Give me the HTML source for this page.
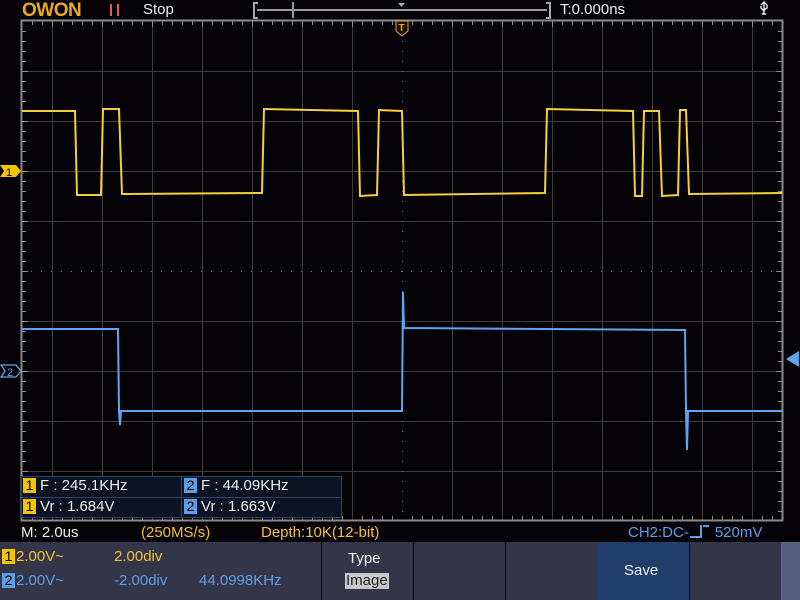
<!DOCTYPE html>
<html><head><meta charset="utf-8"><style>
*{margin:0;padding:0;box-sizing:border-box}
body{width:800px;height:600px;background:#050307;overflow:hidden;font-family:"Liberation Sans",sans-serif;position:relative}
.t{position:absolute;font-size:15px;line-height:16px;white-space:nowrap}
.y{color:#f2c230}.b{color:#5d9fe6}.w{color:#eee}
.badge{display:inline-block;width:13px;height:15px;line-height:15px;text-align:center;color:#000;font-size:14px;margin-right:4px;vertical-align:top}
</style></head><body>
<svg width="800" height="600" style="position:absolute;left:0;top:0">
<g stroke="#3d3d3d" stroke-width="1">
<line x1="52.5" y1="21" x2="52.5" y2="521"/><line x1="102.5" y1="21" x2="102.5" y2="521"/><line x1="152.5" y1="21" x2="152.5" y2="521"/><line x1="202.5" y1="21" x2="202.5" y2="521"/><line x1="252.5" y1="21" x2="252.5" y2="521"/><line x1="302.5" y1="21" x2="302.5" y2="521"/><line x1="352.5" y1="21" x2="352.5" y2="521"/><line x1="452.5" y1="21" x2="452.5" y2="521"/><line x1="502.5" y1="21" x2="502.5" y2="521"/><line x1="552.5" y1="21" x2="552.5" y2="521"/><line x1="602.5" y1="21" x2="602.5" y2="521"/><line x1="652.5" y1="21" x2="652.5" y2="521"/><line x1="702.5" y1="21" x2="702.5" y2="521"/><line x1="752.5" y1="21" x2="752.5" y2="521"/>
<line x1="21" y1="71.5" x2="783" y2="71.5"/><line x1="21" y1="121.5" x2="783" y2="121.5"/><line x1="21" y1="171.5" x2="783" y2="171.5"/><line x1="21" y1="221.5" x2="783" y2="221.5"/><line x1="21" y1="321.5" x2="783" y2="321.5"/><line x1="21" y1="371.5" x2="783" y2="371.5"/><line x1="21" y1="421.5" x2="783" y2="421.5"/><line x1="21" y1="471.5" x2="783" y2="471.5"/>
</g>
<g stroke="#777" stroke-width="1">
<line x1="402.5" y1="21" x2="402.5" y2="521" stroke-dasharray="1 9"/>
<line x1="21" y1="271.5" x2="783" y2="271.5" stroke-dasharray="1 9"/>
</g>
<rect x="21.5" y="20.5" width="761" height="500" fill="none" stroke="#8a8a8a" stroke-width="2"/>
<g stroke="#8a8a8a" stroke-width="1">
<path d="M32.5 21v4M42.5 21v4M62.5 21v4M72.5 21v4M82.5 21v4M92.5 21v4M112.5 21v4M122.5 21v4M132.5 21v4M142.5 21v4M162.5 21v4M172.5 21v4M182.5 21v4M192.5 21v4M212.5 21v4M222.5 21v4M232.5 21v4M242.5 21v4M262.5 21v4M272.5 21v4M282.5 21v4M292.5 21v4M312.5 21v4M322.5 21v4M332.5 21v4M342.5 21v4M362.5 21v4M372.5 21v4M382.5 21v4M392.5 21v4M412.5 21v4M422.5 21v4M432.5 21v4M442.5 21v4M462.5 21v4M472.5 21v4M482.5 21v4M492.5 21v4M512.5 21v4M522.5 21v4M532.5 21v4M542.5 21v4M562.5 21v4M572.5 21v4M582.5 21v4M592.5 21v4M612.5 21v4M622.5 21v4M632.5 21v4M642.5 21v4M662.5 21v4M672.5 21v4M682.5 21v4M692.5 21v4M712.5 21v4M722.5 21v4M732.5 21v4M742.5 21v4M762.5 21v4M772.5 21v4"/>
<path d="M52.5 21v6M102.5 21v6M152.5 21v6M202.5 21v6M252.5 21v6M302.5 21v6M352.5 21v6M402.5 21v6M452.5 21v6M502.5 21v6M552.5 21v6M602.5 21v6M652.5 21v6M702.5 21v6M752.5 21v6"/>
<path d="M32.5 520v-4M42.5 520v-4M62.5 520v-4M72.5 520v-4M82.5 520v-4M92.5 520v-4M112.5 520v-4M122.5 520v-4M132.5 520v-4M142.5 520v-4M162.5 520v-4M172.5 520v-4M182.5 520v-4M192.5 520v-4M212.5 520v-4M222.5 520v-4M232.5 520v-4M242.5 520v-4M262.5 520v-4M272.5 520v-4M282.5 520v-4M292.5 520v-4M312.5 520v-4M322.5 520v-4M332.5 520v-4M342.5 520v-4M362.5 520v-4M372.5 520v-4M382.5 520v-4M392.5 520v-4M412.5 520v-4M422.5 520v-4M432.5 520v-4M442.5 520v-4M462.5 520v-4M472.5 520v-4M482.5 520v-4M492.5 520v-4M512.5 520v-4M522.5 520v-4M532.5 520v-4M542.5 520v-4M562.5 520v-4M572.5 520v-4M582.5 520v-4M592.5 520v-4M612.5 520v-4M622.5 520v-4M632.5 520v-4M642.5 520v-4M662.5 520v-4M672.5 520v-4M682.5 520v-4M692.5 520v-4M712.5 520v-4M722.5 520v-4M732.5 520v-4M742.5 520v-4M762.5 520v-4M772.5 520v-4"/>
<path d="M22 31.5h4M22 41.5h4M22 51.5h4M22 61.5h4M22 81.5h4M22 91.5h4M22 101.5h4M22 111.5h4M22 131.5h4M22 141.5h4M22 151.5h4M22 161.5h4M22 181.5h4M22 191.5h4M22 201.5h4M22 211.5h4M22 231.5h4M22 241.5h4M22 251.5h4M22 261.5h4M22 281.5h4M22 291.5h4M22 301.5h4M22 311.5h4M22 331.5h4M22 341.5h4M22 351.5h4M22 361.5h4M22 381.5h4M22 391.5h4M22 401.5h4M22 411.5h4M22 431.5h4M22 441.5h4M22 451.5h4M22 461.5h4M22 481.5h4M22 491.5h4M22 501.5h4M22 511.5h4"/>
<path d="M782 31.5h-4M782 41.5h-4M782 51.5h-4M782 61.5h-4M782 81.5h-4M782 91.5h-4M782 101.5h-4M782 111.5h-4M782 131.5h-4M782 141.5h-4M782 151.5h-4M782 161.5h-4M782 181.5h-4M782 191.5h-4M782 201.5h-4M782 211.5h-4M782 231.5h-4M782 241.5h-4M782 251.5h-4M782 261.5h-4M782 281.5h-4M782 291.5h-4M782 301.5h-4M782 311.5h-4M782 331.5h-4M782 341.5h-4M782 351.5h-4M782 361.5h-4M782 381.5h-4M782 391.5h-4M782 401.5h-4M782 411.5h-4M782 431.5h-4M782 441.5h-4M782 451.5h-4M782 461.5h-4M782 481.5h-4M782 491.5h-4M782 501.5h-4M782 511.5h-4"/>
<path d="M22 71.5h6M22 121.5h6M22 171.5h6M22 221.5h6M22 271.5h6M22 321.5h6M22 371.5h6M22 421.5h6M22 471.5h6M782 71.5h-6M782 121.5h-6M782 171.5h-6M782 221.5h-6M782 271.5h-6M782 321.5h-6M782 371.5h-6M782 421.5h-6M782 471.5h-6"/>
</g>
<polyline fill="none" stroke="#f5cf3a" stroke-width="2" points="22,111 75,111 77,195 101,195 103,109 119,109 122,194 262,193 264,109 358,111 360,196 377,195 379,110 402,111 404,195 545,193 547,109 633,111 635,196 642,196 644,111 659,111 662,196 678,195 680,110 686,110 689,194 782,193"/>
<polyline fill="none" stroke="#5ea5ec" stroke-width="2" points="22,329 118,329 119,411 120,425 121,411 402,411 403,292 404,328 685,330 686,411 687,450 688,411 782,411"/>
<path d="M0 165h16l5 6-5 6H0l4-6z" fill="#f5c400"/><text x="6" y="176" font-size="11" font-family="Liberation Sans" fill="#000">1</text>
<path d="M1 365h15l5 6-5 6H1l4-6z" fill="none" stroke="#5ea5ec" stroke-width="1.3"/><text x="7" y="376" font-size="11" font-family="Liberation Sans" fill="#5ea5ec">2</text>
<path d="M799 351v16l-13-8z" fill="#5ea5ec"/>
<path d="M396 21h12v10l-6 5-6-5z" fill="#1a1000" stroke="#e8a02a" stroke-width="1"/><text x="398.5" y="31" font-size="10" font-weight="bold" font-family="Liberation Sans" fill="#e8a02a">T</text>
<path d="M258 3h-4v15h4M546 3h4v15h-4" fill="none" stroke="#aaa" stroke-width="2"/>
<line x1="257" y1="10" x2="547" y2="10" stroke="#9a9a9a" stroke-width="2"/>
<line x1="293" y1="2" x2="293" y2="18" stroke="#9a9a9a" stroke-width="2"/>
<path d="M398 3h7l-3.5 4z" fill="#aaa"/>
<path d="M762 14h4M764 14V2M761 5l3-3 3 3M764 11l-3-3V6M764 10l3-2V5" stroke="#eee" stroke-width="1.4" fill="none"/>
<text x="22" y="16" font-size="19" font-weight="bold" font-family="Liberation Sans" fill="#e9a91d" letter-spacing="-0.5">OWON</text>
<rect x="110" y="4" width="2" height="12" fill="#e35a5a"/><rect x="117" y="4" width="2" height="12" fill="#e35a5a"/>
</svg>
<div class="t w" style="left:143px;top:2px">Stop</div>
<div class="t w" style="left:560px;top:2px">T:0.000ns</div>
<div style="position:absolute;left:21px;top:476px;width:321px;height:42px;background:#0c1322;border:1px solid #2e4466"></div>
<div style="position:absolute;left:181px;top:476px;width:1px;height:42px;background:#2e4466"></div>
<div style="position:absolute;left:21px;top:497px;width:321px;height:1px;background:#2e4466"></div>
<div class="t w" style="left:23px;top:478px"><span class="badge" style="background:#f5c400">1</span>F : 245.1KHz</div>
<div class="t w" style="left:184px;top:478px"><span class="badge" style="background:#5d9fe6">2</span>F : 44.09KHz</div>
<div class="t w" style="left:23px;top:499px"><span class="badge" style="background:#f5c400">1</span>Vr : 1.684V</div>
<div class="t w" style="left:184px;top:499px"><span class="badge" style="background:#5d9fe6">2</span>Vr : 1.663V</div>
<div class="t w" style="left:21px;top:525px">M: 2.0us</div>
<div class="t y" style="left:141px;top:525px">(250MS/s)</div>
<div class="t y" style="left:261px;top:525px">Depth:10K(12-bit)</div>
<div class="t b" style="left:628px;top:525px">CH2:DC-<span style="display:inline-block;width:12px;height:13px;border-right:2px solid #5d9fe6;border-bottom:2px solid #5d9fe6;vertical-align:-1px;margin:0 1px"></span><span style="display:inline-block;width:6px;height:13px;border-top:2px solid #5d9fe6;vertical-align:-1px;margin-right:6px"></span>520mV</div>
<div style="position:absolute;left:0;top:542px;width:800px;height:58px;background:#35354a"></div>
<div style="position:absolute;left:321px;top:542px;width:1px;height:58px;background:#000"></div>
<div style="position:absolute;left:413px;top:542px;width:1px;height:58px;background:#000"></div>
<div style="position:absolute;left:505px;top:542px;width:1px;height:58px;background:#000"></div>
<div style="position:absolute;left:598px;top:542px;width:91px;height:58px;background:#1f3e6c"></div>
<div style="position:absolute;left:689px;top:542px;width:1px;height:58px;background:#000"></div>
<div style="position:absolute;left:781px;top:542px;width:19px;height:58px;background:#566080"></div>
<div class="t y" style="left:2px;top:549px"><span class="badge" style="background:#f5c400;margin-right:1px">1</span>2.00V~</div>
<div class="t y" style="left:114px;top:549px">2.00div</div>
<div class="t b" style="left:2px;top:573px"><span class="badge" style="background:#5d9fe6;margin-right:1px">2</span>2.00V~</div>
<div class="t b" style="left:114px;top:573px">-2.00div</div>
<div class="t b" style="left:199px;top:573px">44.0998KHz</div>
<div class="t w" style="left:348px;top:551px">Type</div>
<div class="t" style="left:345px;top:573px;background:#c8c8c8;color:#222;padding:0 1px">Image</div>
<div class="t w" style="left:624px;top:563px">Save</div>
</body></html>
